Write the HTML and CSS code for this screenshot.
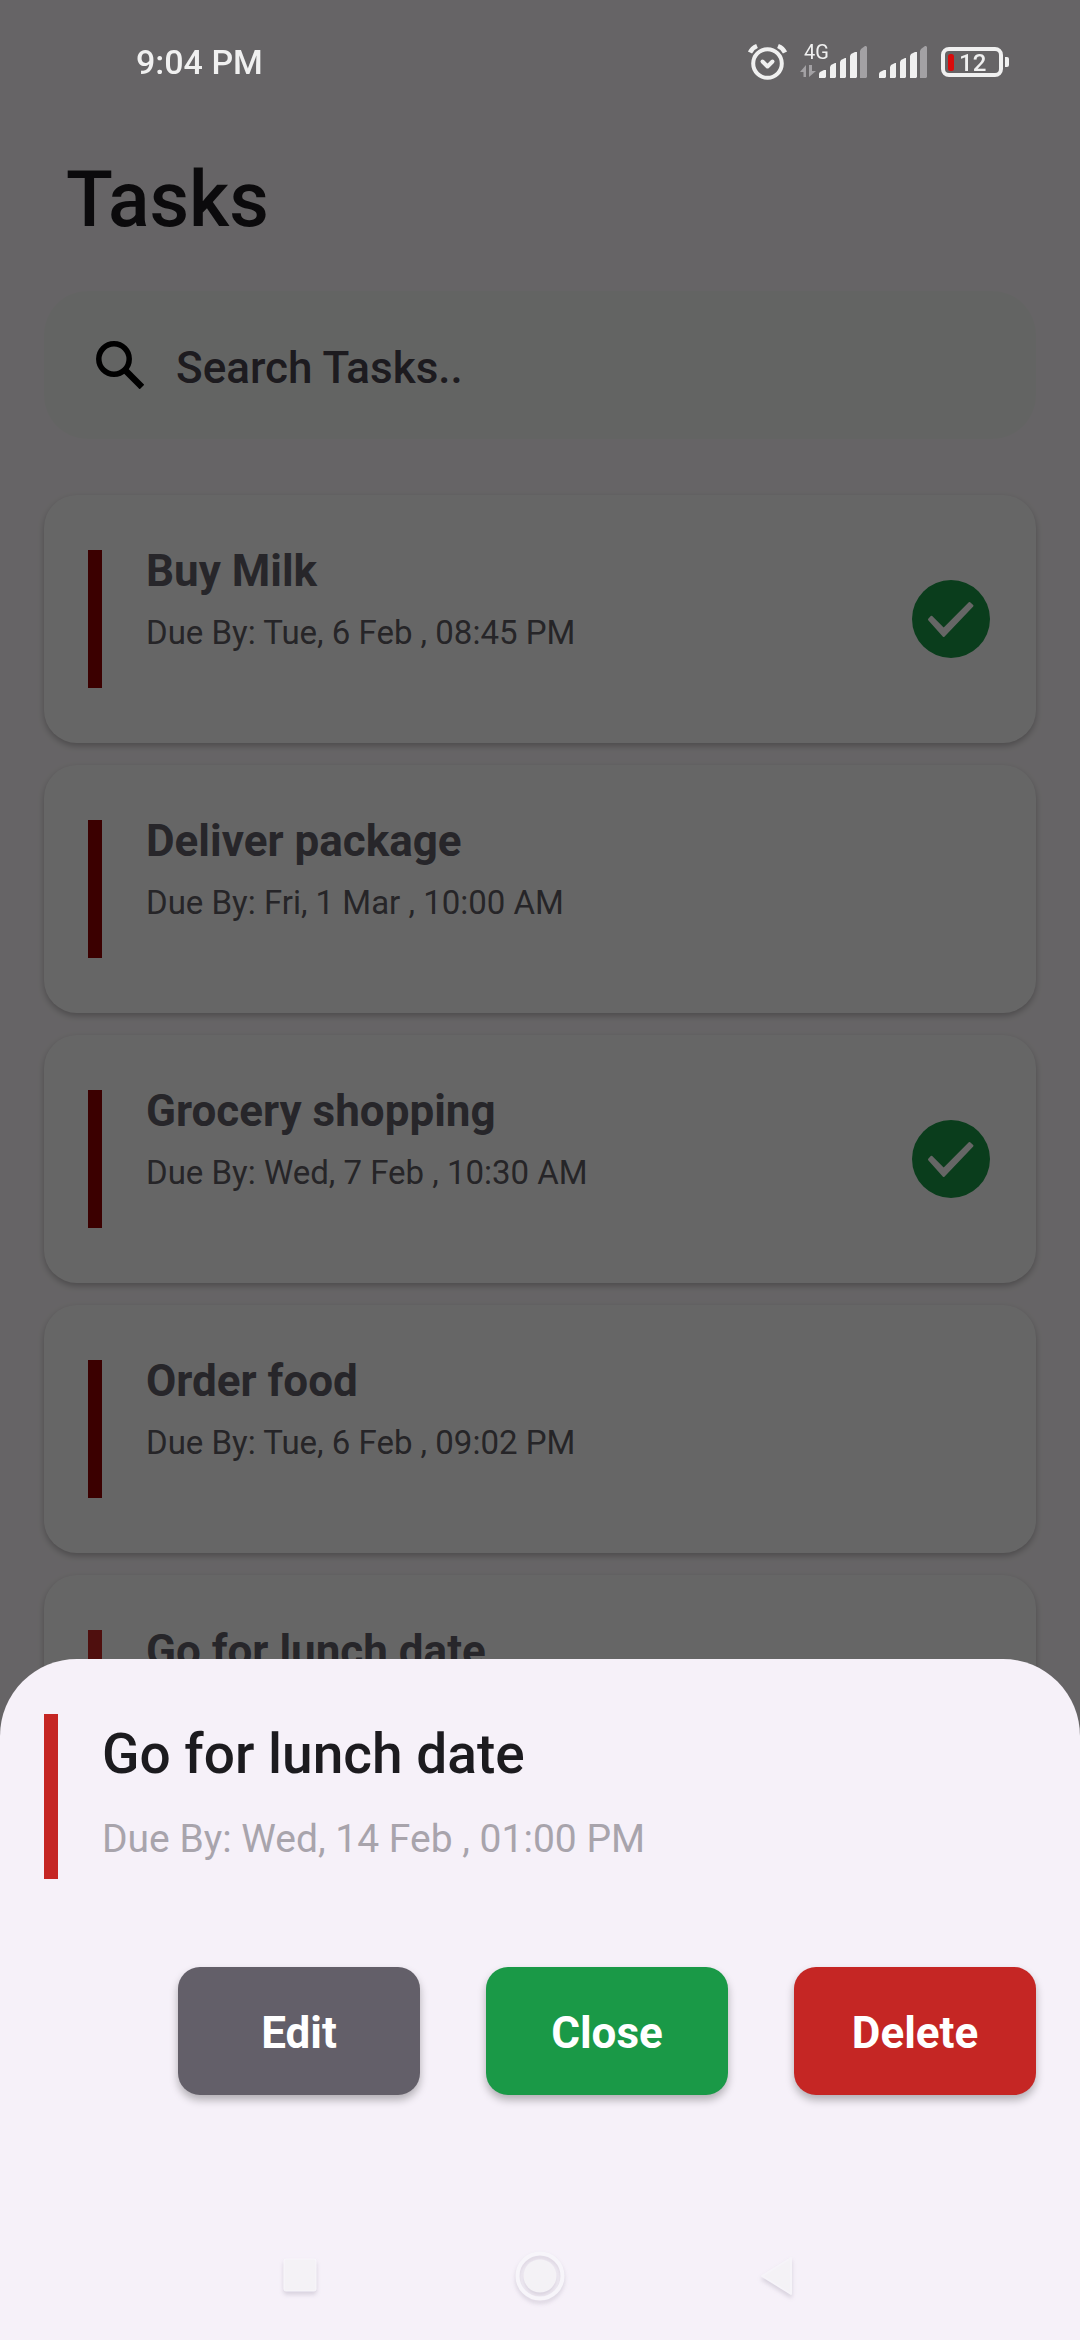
FILE: index.html
```html
<!DOCTYPE html>
<html lang="en">
<head>
<meta charset="utf-8">
<meta name="viewport" content="width=device-width, initial-scale=1">
<title>Tasks</title>
<link rel="stylesheet" href="styles.css">
</head>
<body>
<header class="status-bar">
  <span class="clock">9:04 PM</span>
  <div class="status-icons">
    <svg width="41" height="50" viewBox="0 -6 41 50" fill="none" stroke="#f0f0f0" stroke-width="4" stroke-linecap="round" stroke-linejoin="round" aria-label="Alarm">
      <circle cx="20.500" cy="20.500" r="14.300"/>
      <path d="M3 9.500Q5 5 10 3M31 3Q36 5 38 9.500" stroke-linecap="butt" stroke-width="4.500"/>
      <path d="M15.500 18.500l5 5 5-5"/>
    </svg>
    <svg width="67" height="50" viewBox="0 -4 67 50" fill="#f0f0f0" aria-label="4G signal">
      <text class="network" x="4" y="18">4G</text>
      <path fill="#a3a1a4" d="M6 24v12H3.500v-5H0zM9 36V24h3v6h4z"/>
      <path d="M19 37v-4q0-1 1-2l4-2h2v7l-1 1zM30 37V26l1-2 4-2h1v14l-1 1zM40 37V21l1-2 4-2h1v19l-1 1zM50 37V15l1-2 4-2h2v25l-1 1z"/>
      <path fill="#a3a1a4" d="M60 37V10l1-2 4-3h1l1 1v30l-1 1z"/>
    </svg>
    <svg width="48" height="50" viewBox="0 -4 48 50" fill="#f0f0f0" aria-label="Signal">
      <path d="M0 37v-4q0-1 1-2l4-2h2v7l-1 1zM11 37V26l1-2 4-2h1v14l-1 1zM21 37V21l1-2 4-2h1v19l-1 1zM31 37V15l1-2 4-2h2v25l-1 1z"/>
      <path fill="#a3a1a4" d="M41 37V10l1-2 4-3h1l1 1v30l-1 1z"/>
    </svg>
    <svg width="70" height="50" viewBox="0 -4 70 50" aria-label="Battery 12 percent">
      <rect x="4" y="8" width="58" height="26" rx="6" fill="none" stroke="#f0f0f0" stroke-width="4"/>
      <path fill="#f0f0f0" d="M66 16h2q2 0 2 2v6q0 2-2 2h-2z"/>
      <rect x="9" y="13" width="6" height="17" rx="2.500" fill="#d90b0b"/>
      <text class="charge" x="20" y="30" fill="#f0f0f0">12</text>
    </svg>
  </div>
</header>

<main class="page">
  <h1 class="page-title">Tasks</h1>
  <label class="search">
    <svg width="48" height="48" viewBox="0 0 48 48" fill="none" stroke="#000" aria-hidden="true">
      <circle cx="18" cy="18" r="15.200" stroke-width="5.500"/>
      <path d="M29 29L46 46" stroke-width="6.500"/>
    </svg>
    <input class="search-input" type="search" placeholder="Search Tasks.." aria-label="Search tasks">
  </label>

  <ul class="task-list">
    <li class="task">
      <div class="task-text high">
        <h2 class="task-title">Buy Milk</h2>
        <p class="task-due">Due By: Tue, 6 Feb , 08:45 PM</p>
      </div>
      <svg class="done" viewBox="0 0 78 78" aria-label="Completed"><circle cx="39" cy="39" r="39" fill="#1a9947"/><path d="M17 39.500l2.500-2.700L31.700 49 57.500 23l3 2.700L31.700 56z" fill="#fff" stroke="#fff" stroke-width="2" stroke-linejoin="round"/></svg>
    </li>
    <li class="task">
      <div class="task-text high">
        <h2 class="task-title">Deliver package</h2>
        <p class="task-due">Due By: Fri, 1 Mar , 10:00 AM</p>
      </div>
    </li>
    <li class="task">
      <div class="task-text high">
        <h2 class="task-title">Grocery shopping</h2>
        <p class="task-due">Due By: Wed, 7 Feb , 10:30 AM</p>
      </div>
      <svg class="done" viewBox="0 0 78 78" aria-label="Completed"><circle cx="39" cy="39" r="39" fill="#1a9947"/><path d="M17 39.500l2.500-2.700L31.700 49 57.500 23l3 2.700L31.700 56z" fill="#fff" stroke="#fff" stroke-width="2" stroke-linejoin="round"/></svg>
    </li>
    <li class="task">
      <div class="task-text high">
        <h2 class="task-title">Order food</h2>
        <p class="task-due">Due By: Tue, 6 Feb , 09:02 PM</p>
      </div>
    </li>
    <li class="task">
      <div class="task-text medium">
        <h2 class="task-title">Go for lunch date</h2>
        <p class="task-due">Due By: Wed, 14 Feb , 01:00 PM</p>
      </div>
    </li>
  </ul>
</main>

<div class="scrim"></div>

<section class="sheet" role="dialog" aria-labelledby="sheet-title">
  <div class="sheet-task">
    <h2 class="sheet-title" id="sheet-title">Go for lunch date</h2>
    <p class="sheet-due">Due By: Wed, 14 Feb , 01:00 PM</p>
  </div>
  <div class="actions">
    <button class="action edit" type="button">Edit</button>
    <button class="action close" type="button">Close</button>
    <button class="action delete" type="button">Delete</button>
  </div>
  <nav class="system-nav" aria-label="System">
    <button class="nav-button" type="button" aria-label="Recent apps">
      <svg width="56" height="56" viewBox="0 0 56 56"><rect x="12" y="11" width="32" height="32" rx="2" fill="#f4f2f6" stroke="#f8f6fb"/></svg>
    </button>
    <button class="nav-button" type="button" aria-label="Home">
      <svg width="56" height="56" viewBox="0 0 56 56"><circle cx="28" cy="28" r="22.500" fill="none" stroke="#f7f5fa" stroke-width="4"/><circle cx="28" cy="28" r="16.500" fill="#f4f2f6"/></svg>
    </button>
    <button class="nav-button" type="button" aria-label="Back">
      <svg width="56" height="56" viewBox="0 0 56 56"><path d="M10 28L39 10v36z" fill="#f4f2f6" stroke="#f6f4f9" stroke-width="2" stroke-linejoin="round"/></svg>
    </button>
  </nav>
</section>
</body>
</html>
```
FILE: styles.css
```css
* {
  box-sizing: border-box;
}

body {
  margin: 0;
  height: 100vh;
  overflow: hidden;
  background: #fffbfe;
  color: #1c1b1f;
  font-family: Roboto, "Noto Sans", sans-serif;
}

h1, h2, p, ul {
  margin: 0;
  padding: 0;
}

/* System status bar, kept above the scrim */
.status-bar {
  position: relative;
  z-index: 2;
  display: flex;
  align-items: center;
  justify-content: space-between;
  height: 124px;
  padding: 0 71px 0 136px;
  color: #f0f0f0;
}

.clock {
  font-size: 34px;
  font-weight: 500;
  line-height: 40px;
}

.status-icons {
  display: flex;
  gap: 12px;
}

.network {
  font-size: 20px;
}

.charge {
  font-size: 24px;
  font-weight: 500;
}

.page {
  padding: 26px 44px 0;
}

.page-title {
  padding-left: 22px;
  color: #1c1b1f;
  font-size: 77px;
  font-weight: 500;
  line-height: 100px;
}

.search {
  display: flex;
  align-items: center;
  gap: 32px;
  height: 148px;
  margin-top: 41px;
  padding: 0 52px;
  border-radius: 44px;
  background: #f8faf8;
}

.search-input {
  flex: 1;
  min-width: 0;
  padding: 5px 0 0;
  border: 0;
  outline: 0;
  background: none;
  color: #49454f;
  font: 500 44px/60px Roboto, "Noto Sans", sans-serif;
}

.search-input::placeholder {
  color: #49454f;
  opacity: 1;
}

.task-list {
  display: grid;
  gap: 22px;
  margin-top: 56px;
  list-style: none;
}

.task {
  display: flex;
  align-items: center;
  justify-content: space-between;
  height: 248px;
  padding: 0 46px 0 44px;
  border-radius: 33px;
  background: #fff;
  box-shadow: 0 3px 6px rgba(0, 0, 0, 0.25);
}

.task-text {
  display: flex;
  flex-direction: column;
  gap: 19px;
  height: 138px;
  padding-left: 44px;
  border-left: 14px solid;
}

.high {
  border-color: #940000;
}

.medium {
  border-color: #c52624;
}

.task-title {
  color: #635f69;
  font-size: 44px;
  font-weight: 700;
  line-height: 42px;
}

.task-due {
  color: #5f5d64;
  font-size: 33px;
  line-height: 44px;
}

.done {
  width: 78px;
  height: 78px;
}

.scrim {
  position: fixed;
  inset: 0;
  z-index: 1;
  background: rgba(0, 0, 0, 0.6);
}

.sheet {
  position: fixed;
  right: 0;
  bottom: 0;
  left: 0;
  z-index: 3;
  padding: 55px 44px 0;
  border-radius: 77px 77px 0 0;
  background: #f6f1f9;
}

.sheet-task {
  display: flex;
  flex-direction: column;
  gap: 16px;
  height: 165px;
  padding-left: 44px;
  border-left: 14px solid #c52624;
}

.sheet-title {
  font-size: 55px;
  font-weight: 500;
  line-height: 80px;
}

.sheet-due {
  color: #a8a4ac;
  font-size: 39px;
  line-height: 58px;
}

.actions {
  display: flex;
  justify-content: flex-end;
  gap: 66px;
  margin: 88px 0 117px;
}

.action {
  width: 242px;
  height: 128px;
  padding: 4px 0 0;
  border: 0;
  border-radius: 22px;
  box-shadow: 0 5px 8px rgba(0, 0, 0, 0.28);
  color: #fff;
  font: 700 44px/52px Roboto, "Noto Sans", sans-serif;
}

.edit {
  background: #635f69;
}

.close {
  background: #1a9947;
}

.delete {
  background: #c52624;
}

.system-nav {
  display: flex;
  align-items: center;
  justify-content: center;
  gap: 184px;
  height: 128px;
}

.nav-button {
  display: flex;
  padding: 0;
  border: 0;
  background: none;
  filter: drop-shadow(0 3px 2px rgba(90, 80, 110, 0.2));
}
```
